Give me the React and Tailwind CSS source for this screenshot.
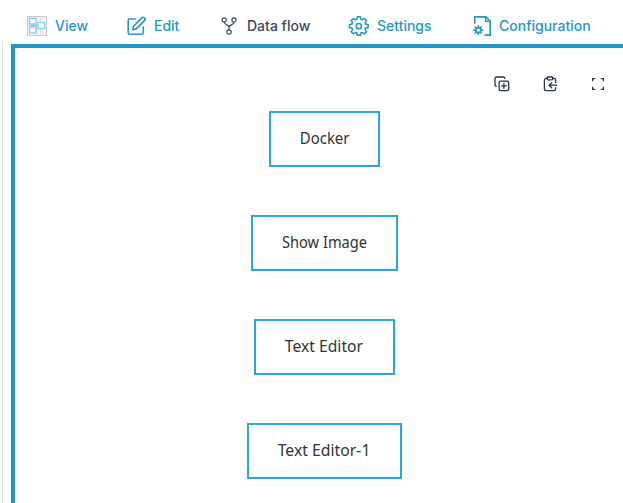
import React from "react";

const stroke = {
  fill: "none",
  stroke: "currentColor",
  strokeLinecap: "round",
  strokeLinejoin: "round",
};

function ViewIcon() {
  return (
    <svg width="20" height="20" viewBox="0 0 20 20" fill="none">
      <rect x=".5" y=".5" width="19" height="19" fill="#f3f2f0" stroke="#c9c7c4" />
      <path d="M6.5 0v20M0 9.5h20M13.5 0v20" stroke="#dfddda" />
      <g fill="#fff" stroke="#84cdf0" strokeWidth="1.3">
        <path d="M5.8 8v3M9 9.5h2M2.6 9.5H9" />
        <rect x="2.6" y="2.4" width="6.4" height="5.6" />
        <rect x="2.6" y="11" width="6.4" height="6" />
        <rect x="11" y="6.5" width="6.5" height="6" />
      </g>
    </svg>
  );
}

function EditIcon() {
  return (
    <svg width="20" height="20" viewBox="0 0 20 20" strokeWidth="1.6" {...stroke}>
      <path d="M8.5 3H2.8C1.9 3 1.2 3.7 1.2 4.6v12c0 1 .7 1.7 1.6 1.7h11.9c.9 0 1.6-.7 1.6-1.7V11" />
      <path d="M6.5 10.2 14.8 1.9a1.9 1.9 0 0 1 2.7 2.7L9.2 12.9 5.8 13.7z" />
    </svg>
  );
}

function FlowIcon() {
  return (
    <svg width="17" height="20" viewBox="0 0 17 20" strokeWidth="1.2" {...stroke}>
      <circle cx="3.2" cy="3.9" r="2.1" />
      <circle cx="13" cy="3.9" r="2.1" />
      <circle cx="8" cy="16" r="2.2" />
      <path d="M3.2 6c0 3.2 4.8 2.5 4.8 5.2v2.6M13 6c0 3.2-5 2.5-5 5.2" />
    </svg>
  );
}

function GearIcon() {
  return (
    <svg width="22" height="20" viewBox="-.4 .9 25.2 22.9" strokeWidth="1.8" {...stroke}>
      <path d="M10.3 1.8h3.4l.6 2.8 1.7.7 2.4-1.6 2.4 2.4-1.6 2.4.7 1.7 2.8.6v3.4l-2.8.6-.7 1.7 1.6 2.4-2.4 2.4-2.4-1.6-1.7.7-.6 2.5h-3.4l-.6-2.5-1.7-.7-2.4 1.6-2.4-2.4 1.6-2.4-.7-1.7-2.8-.6v-3.4l2.8-.6.7-1.7-1.6-2.4 2.4-2.4L8 5.3l1.7-.7z" />
      <circle cx="12" cy="12.5" r="3" />
    </svg>
  );
}

function ConfigIcon() {
  return (
    <svg width="19" height="20" viewBox="0 0 19 20" fill="none" stroke="currentColor">
      <path d="M1.8 7.7V.9H13L17.2 5v14.1h-5.7" strokeWidth="1.6" />
      <path d="M12.7 1v4.3h4.5" strokeWidth="1.5" />
      <circle cx="5.3" cy="14.1" r="2.5" strokeWidth="1.6" />
      <path d="M5.3 9.2v2.2M5.3 16.8V19M.4 14.1h2.2M8 14.1h2.2M1.9 10.7l1.5 1.5M7.2 16l1.5 1.5M8.7 10.7l-1.5 1.5M3.4 16l-1.5 1.5" strokeWidth="1.7" />
    </svg>
  );
}

function NavItem({ icon, iconClass, label, className }) {
  return (
    <button className={`flex h-5 shrink-0 items-center whitespace-nowrap ${className}`}>
      <span className={`flex shrink-0 ${iconClass}`}>{icon}</span>
      <span className="pb-[2px]">{label}</span>
    </button>
  );
}

function Node({ label, className, textClass }) {
  return (
    <div
      className={`flex h-14 shrink-0 items-center justify-center border-2 border-[#2ca4dc] bg-white pb-[2px] ${className}`}
    >
      <span className={`inline-block text-[16px] leading-6 whitespace-nowrap text-[#333] ${textClass}`}>
        {label}
      </span>
    </div>
  );
}

export default function App() {
  return (
    <div className="flex h-[503px] w-[623px] flex-col overflow-hidden bg-white font-['Inter',sans-serif]">
      <nav className="flex h-11 shrink-0 items-center pt-2 pl-[27px] text-[14px] font-medium text-[#2596c8]">
        <NavItem icon={<ViewIcon />} iconClass="w-7" label="View" className="w-[100px]" />
        <NavItem icon={<EditIcon />} iconClass="w-[27px]" label="Edit" className="w-[94px]" />
        <NavItem icon={<FlowIcon />} iconClass="w-[26px]" label="Data flow" className="w-[127px] text-[#3f4760]" />
        <NavItem icon={<GearIcon />} iconClass="w-[29px]" label="Settings" className="w-[125px]" />
        <NavItem icon={<ConfigIcon />} iconClass="w-[26px]" label="Configuration" className="w-[130px]" />
      </nav>
      <div className="-mt-[3px] flex min-h-0 flex-1">
        <div className="ml-[2px] w-[9px] shrink-0 border-l border-[#e2e2e2]" />
        <main className="mt-[3px] min-w-0 flex-1 border-t-4 border-l-4 border-[#2596c8]">
          <div className="flex h-[63px] items-start justify-end gap-8 pt-7 pr-[17px] text-[#29324a]">
            <svg width="16" height="16" viewBox="0 0 16 16" strokeWidth="1.3" {...stroke}>
              <rect x="5.1" y="5.1" width="9.6" height="9.6" rx="1.6" />
              <path d="M2.4 10.2C1.6 10.2 1 9.6 1 8.8V2.5C1 1.7 1.7 1 2.5 1h6.8c.8 0 1.4.6 1.4 1.4M7.5 9.9h4.8M9.9 7.5v4.8" />
            </svg>
            <svg width="16" height="16" viewBox="0 0 16 16" strokeWidth="1.3" {...stroke}>
              <rect x="5.2" y="1" width="5.6" height="2.8" rx=".8" />
              <path d="M5.2 2.4H4A1.6 1.6 0 0 0 2.4 4v9.1c0 .9.7 1.6 1.6 1.6h8c.9 0 1.6-.7 1.6-1.6v-1.5M10.8 2.4H12c.9 0 1.6.7 1.6 1.6v2.5M14.7 9.2H7.2M9.7 6.6 7.1 9.2l2.6 2.6" />
            </svg>
            <svg width="16" height="16" viewBox="0 0 16 16" fill="none" stroke="currentColor" strokeWidth="1.2">
              <path d="M2.6 5.2V2.6h2.6M10.8 2.6h2.6v2.6M13.4 10.8v2.6h-2.6M5.2 13.4H2.6v-2.6" />
            </svg>
          </div>
          <div className="flex w-[618.5px] flex-col items-center gap-12 font-['Trebuchet_MS','Noto_Sans',sans-serif]">
            <Node label="Docker" className="w-[111.5px]" textClass="scale-x-[0.935]" />
            <Node label="Show Image" className="w-[146.5px]" textClass="scale-x-[0.915]" />
            <Node label="Text Editor" className="w-[140.5px]" textClass="scale-x-[0.98]" />
            <Node label="Text Editor-1" className="w-[154.5px]" textClass="scale-x-[0.985]" />
          </div>
        </main>
      </div>
    </div>
  );
}
